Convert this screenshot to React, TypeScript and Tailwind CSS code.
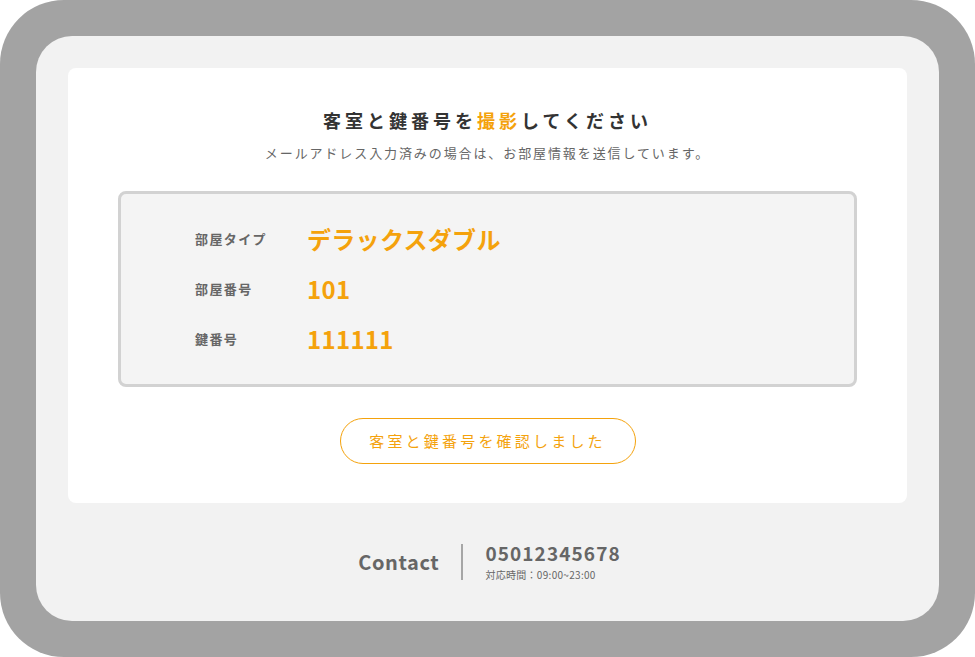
const jp = { fontFamily: '"Noto Sans CJK JP", "Noto Sans", sans-serif' };

function InfoRow({ label, value }: { label: string; value: string }) {
  return (
    <div className="flex items-center h-[50px]">
      <div className="w-[112px] text-[13px] font-bold tracking-[1.4px] text-[#666]">{label}</div>
      <div className="text-[24px] font-bold tracking-[0.3px] text-[#f4a20c] leading-none">{value}</div>
    </div>
  );
}

export default function App() {
  return (
    <div className="w-[975px] h-[657px] bg-white" style={jp}>
      <div className="w-full h-full rounded-[64px] bg-[#a3a3a3] p-[36px]">
        <div className="w-full h-full rounded-[36px] bg-[#f2f2f2] pt-[32px] px-[32px] flex flex-col">
          <div className="bg-white rounded-[8px] h-[435px] flex flex-col items-center pt-[39px]">
            <h1 className="text-[18px] font-bold tracking-[4px] text-[#333] leading-[26px]">
              客室と鍵番号を<span className="text-[#f4a20c]">撮影</span>してください
            </h1>
            <p className="mt-[11px] text-[13px] tracking-[1.9px] text-[#666] leading-[18px]">
              メールアドレス入力済みの場合は、お部屋情報を送信しています。
            </p>
            <div className="mt-[29px] w-[739px] h-[196px] rounded-[8px] border-[3px] border-[#d2d2d2] bg-[#f4f4f4] flex flex-col justify-center pl-[74px]">
              <InfoRow label="部屋タイプ" value="デラックスダブル" />
              <InfoRow label="部屋番号" value="101" />
              <InfoRow label="鍵番号" value="111111" />
            </div>
            <button className="mt-[31px] w-[296px] h-[46px] rounded-full border border-[#f4a20c] bg-white text-[15px] tracking-[3.2px] text-[#f4a20c]">
              客室と鍵番号を確認しました
            </button>
          </div>
          <div className="flex-1 flex items-center justify-center">
            <div className="flex items-center pl-[4px]">
              <div className="text-[20px] font-bold tracking-[0.6px] text-[#666] pr-[22px]">Contact</div>
              <div className="w-[2px] h-[36px] bg-[#a6a6a6]" />
              <div className="pl-[22px] flex flex-col">
                <div className="text-[19px] font-bold tracking-[1.1px] text-[#666] leading-[22px]">05012345678</div>
                <div className="mt-[4px] text-[10px] tracking-[0.3px] text-[#666] leading-[14px]">対応時間：09:00~23:00</div>
              </div>
            </div>
          </div>
        </div>
      </div>
    </div>
  );
}
